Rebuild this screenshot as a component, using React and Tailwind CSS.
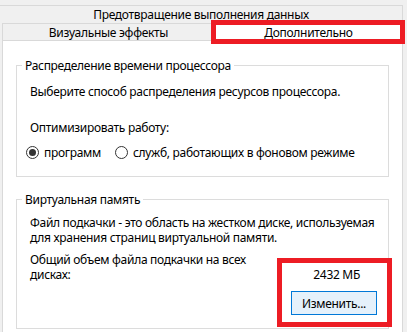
import React from "react";

function Radio({ checked, label }) {
  return (
    <label className="flex items-center">
      <span className="flex h-[13px] w-[13px] items-center justify-center rounded-full border border-[#333333] bg-white">
        {checked && <span className="h-[7px] w-[7px] rounded-full bg-[#333333]" />}
      </span>
      <span className="ml-[5px]">{label}</span>
    </label>
  );
}

function Group({ title, children, className }) {
  return (
    <fieldset className={`w-[373px] shrink-0 border border-[#dcdcdc] p-0 ${className}`}>
      <legend className="ml-[5px] px-[3px]">{title}</legend>
      {children}
    </fieldset>
  );
}

export default function App() {
  return (
    <div
      className="relative flex h-[332px] w-[407px] flex-col overflow-hidden whitespace-nowrap bg-[#f0f0f0] pt-[5px] text-[12px] leading-[15px] tracking-[-0.3px] text-black"
      style={{ fontFamily: '"Noto Sans", sans-serif' }}
    >
      <div className="flex h-[18px] w-[403px] shrink-0 items-center justify-center border-t border-r border-[#d9d9d9]">
        Предотвращение выполнения данных
      </div>

      <div className="ml-[2px] flex h-[18px] w-[401px] shrink-0">
        <div className="flex w-[212px] items-center justify-center border-t border-l border-b border-[#d9d9d9]">
          Визуальные эффекты
        </div>
        <div className="flex flex-1 items-center justify-center border-t border-l border-r border-[#d9d9d9] bg-white">
          Дополнительно
        </div>
      </div>

      <div className="ml-[2px] flex min-h-0 w-[401px] flex-1 flex-col border-l border-r border-[#d9d9d9] bg-white pl-[13px]">
        <Group title="Распределение времени процессора" className="mt-[17px]">
          <div className="px-[13px] pb-[16px]">
            <p className="mt-[11px]">Выберите способ распределения ресурсов процессора.</p>
            <p className="mt-[21px]">Оптимизировать работу:</p>
            <div className="mt-[10px] ml-[-4px] flex items-center gap-[14px]">
              <Radio checked label="программ" />
              <Radio label="служб, работающих в фоновом режиме" />
            </div>
          </div>
        </Group>

        <Group title="Виртуальная память" className="mt-[15px]">
          <div className="px-[13px] pb-[13px]">
            <p className="mt-[8px]">
              Файл подкачки - это область на жестком диске, используемая
              <br />
              для хранения страниц виртуальной памяти.
            </p>
            <div className="mt-[7px] flex">
              <p className="w-[230px]">
                Общий объем файла подкачки на всех
                <br />
                дисках:
              </p>
              <div className="ml-auto mr-[-2px] flex w-[86px] flex-col">
                <span className="mt-[15px] pr-[17px] text-right">2432 МБ</span>
                <button className="mt-[9px] h-[24px] w-[86px] border border-[#0078d7] bg-[#e5f1fb]">
                  Изменить...
                </button>
              </div>
            </div>
          </div>
        </Group>
      </div>

      <div className="absolute left-[211px] top-[20px] h-[24px] w-[194px] border-[5px] border-[#ed1c24]" />
      <div className="absolute left-[277px] top-[258px] h-[69px] w-[115px] border-[5px] border-[#ed1c24]" />
    </div>
  );
}
